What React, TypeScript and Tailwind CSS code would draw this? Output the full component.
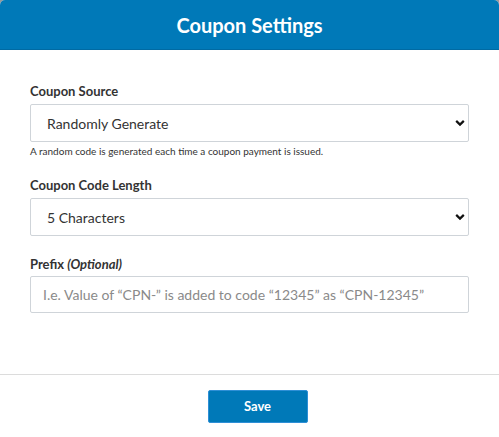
import { useState } from "react";

const Chevron = () => (
  <svg
    className="pointer-events-none absolute right-[4px] top-1/2 -translate-y-1/2"
    width="10"
    height="7"
    viewBox="0 0 10 7"
    fill="none"
  >
    <path d="M1.2 1.4 L5 5.1 L8.8 1.4" stroke="#111" strokeWidth="2.2" />
  </svg>
);

function SelectField({
  value,
  options,
  onChange,
}: {
  value: string;
  options: string[];
  onChange: (v: string) => void;
}) {
  return (
    <div className="relative">
      <select
        value={value}
        onChange={(e) => onChange(e.target.value)}
        className="h-[38px] w-full appearance-none rounded-[2px] border border-[#cfd4d9] bg-white pl-[16px] text-[14px] text-[#333] outline-none"
      >
        {options.map((o) => (
          <option key={o}>{o}</option>
        ))}
      </select>
      <Chevron />
    </div>
  );
}

export default function App() {
  const [source, setSource] = useState("Randomly Generate");
  const [length, setLength] = useState("5 Characters");
  const [prefix, setPrefix] = useState("");

  return (
    <div
      className="h-[437px] w-[499px] bg-[#9a9a9a]"
      style={{ fontFamily: "Lato, 'Open Sans', sans-serif" }}
    >
      <div className="flex h-full flex-col overflow-hidden rounded-t-[5px] bg-white">
        <div className="flex h-[50px] shrink-0 items-center justify-center border-b border-[#006aa3] bg-[#0079b8]">
          <h1 className="text-[20px] font-bold text-white">Coupon Settings</h1>
        </div>

        <div className="flex-1 px-[30px] pt-[33px]">
          <label className="block text-[13px] font-bold leading-[16px] text-[#333]">
            Coupon Source
          </label>
          <div className="mt-[5px]">
            <SelectField
              value={source}
              onChange={setSource}
              options={["Randomly Generate", "Manual Entry"]}
            />
          </div>
          <p className="mt-[3px] text-[10px] leading-[13px] text-[#333]">
            A random code is generated each time a coupon payment is issued.
          </p>

          <label className="mt-[19px] block text-[13px] font-bold leading-[16px] text-[#333]">
            Coupon Code Length
          </label>
          <div className="mt-[5px]">
            <SelectField
              value={length}
              onChange={setLength}
              options={["5 Characters", "6 Characters", "8 Characters", "10 Characters"]}
            />
          </div>

          <label className="mt-[20px] block text-[13px] font-bold leading-[16px] text-[#333]">
            Prefix <span className="italic">(Optional)</span>
          </label>
          <input
            value={prefix}
            onChange={(e) => setPrefix(e.target.value)}
            placeholder="I.e. Value of “CPN-” is added to code “12345” as “CPN-12345”"
            className="mt-[4px] h-[37px] w-full rounded-[2px] border border-[#cfd4d9] px-[12px] text-[14px] text-[#333] outline-none placeholder:text-[#8a8a8a]"
          />
        </div>

        <div className="flex h-[63px] shrink-0 justify-center border-t border-[#dcdcdc] pl-[16px] pt-[15px]">
          <button className="h-[33px] w-[100px] rounded-[2px] border border-[#2e8fd6] bg-[#0079b8] text-[13px] font-bold text-white">
            Save
          </button>
        </div>
      </div>
    </div>
  );
}
